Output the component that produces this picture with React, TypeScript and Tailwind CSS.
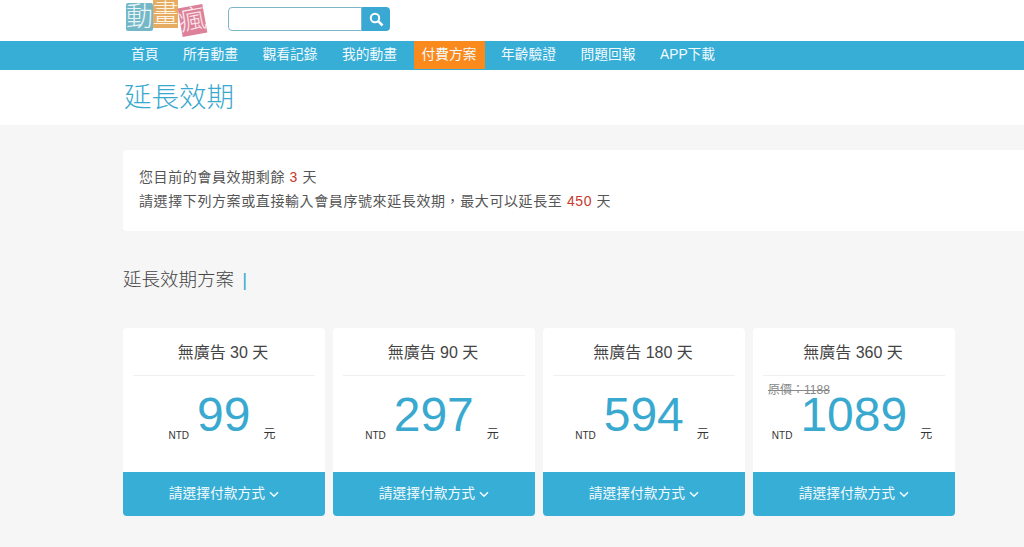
const navItems = ["首頁", "所有動畫", "觀看記錄", "我的動畫", "付費方案", "年齡驗證", "問題回報", "APP下載"];

const plans = [
  { title: "無廣告 30 天", price: "99" },
  { title: "無廣告 90 天", price: "297" },
  { title: "無廣告 180 天", price: "594" },
  { title: "無廣告 360 天", price: "1089", original: "原價\uFF1A1188" },
];

function Logo() {
  return (
    <div className="relative h-[38px] w-[84px] font-light">
      {/* logo tiles */}
      <span className="absolute left-0 top-[3px] flex h-[28px] w-[27px] items-center justify-center rounded-[2px] bg-[#74b7c6] text-[27px] leading-none text-[#e8f4f6]">
        動
      </span>
      <span className="absolute left-[27px] top-0 flex h-[28px] w-[25px] items-center justify-center bg-[#e6ad62] text-[26px] leading-none text-[#fdf3e2]">
        畫
      </span>
      <span className="absolute left-[54px] top-[6px] flex h-[29px] w-[25px] rotate-[-10deg] items-center justify-center bg-[#dc8199] text-[27px] leading-none text-[#fbe8ed]">
        瘋
      </span>
    </div>
  );
}

function PlanCard({ title, price, original }: { title: string; price: string; original?: string }) {
  return (
    <div className="w-[202px] shrink-0">
      <div className="relative h-[144px] rounded-t bg-white px-[10px]">
        <div className="flex h-[48px] items-center justify-center border-b border-[#f0f0f0] pr-[2px] pt-[2px] text-[16px] text-[#444]">
          {title}
        </div>
        {original && (
          <span className="absolute left-[15px] top-[54px] text-[12px] leading-[16px] text-[#888] line-through">
            {original}
          </span>
        )}
        <div className="mt-[11px] flex items-end justify-center pr-[4px] text-[#333]">
          <span className="mb-[1px] text-[10px] leading-[12px]">NTD</span>
          <span className="ml-[8px] text-[48px] leading-[56px] text-[#39a9d0]">{price}</span>
          <span className="mb-[1px] ml-[13px] text-[12px] leading-[16px]">元</span>
        </div>
      </div>
      <button className="flex h-[44px] w-full items-center justify-center gap-[4px] rounded-b bg-[#37aed6] text-[13.75px] text-[#f2fafd]">
        請選擇付款方式
        <svg width="10" height="7" viewBox="0 0 10 7" fill="none" stroke="currentColor" strokeWidth="1.6">
          <path d="M1 1.2 5 5.2 9 1.2" />
        </svg>
      </button>
    </div>
  );
}

export default function App() {
  return (
    <div className="h-[547px] w-full overflow-hidden bg-[#f6f6f6] font-['Liberation_Sans','Noto_Sans_CJK_TC',sans-serif]">
      {/* header */}
      <header className="flex h-[41px] items-start bg-white pl-[126px]">
        <Logo />
        <div className="ml-[18px] mt-[7px] flex h-[24px] w-[162px]">
          <input className="h-full w-[134px] rounded-l border border-[#7fb5c8] bg-white" />
          <button className="flex h-full w-[28px] items-center justify-center rounded-r bg-[#39a9d4] text-white">
            <svg width="15" height="15" viewBox="0 0 15 15" fill="none" stroke="currentColor">
              <circle cx="6" cy="6" r="4.2" strokeWidth="2" />
              <path d="M9.2 9.2 13.5 13.5" strokeWidth="2.6" />
            </svg>
          </button>
        </div>
      </header>

      {/* nav */}
      <nav className="flex h-[29px] gap-[8.5px] bg-[#37aed6] pl-[123px] text-[13.75px] text-[#f2fafd]">
        {navItems.map((item) => (
          <a
            key={item}
            className={
              item === "付費方案"
                ? "flex h-[28px] items-center bg-[#fb8a1d] px-[8px]"
                : "flex h-[28px] items-center px-[8px]"
            }
          >
            {item}
          </a>
        ))}
      </nav>

      {/* page title */}
      <div className="flex h-[55px] items-center bg-white pl-[124px] text-[27.5px] font-light text-[#39a9d0]">
        延長效期
      </div>

      <main className="pl-[123px] pt-[25px]">
        {/* notice */}
        <div className="rounded-l bg-white px-[16px] pb-[18px] pt-[15px] text-[14px] leading-[24px] tracking-[0.6px] text-[#555]">
          <p>
            您目前的會員效期剩餘 <span className="text-[#c8382e]">3</span> 天
          </p>
          <p>
            {"請選擇下列方案或直接輸入會員序號來延長效期\uFF0C最大可以延長至 "}
            <span className="text-[#c8382e]">450</span> 天
          </p>
        </div>

        {/* plans */}
        <h2 className="mt-[36px] text-[18.5px] font-light leading-[26px] text-[#444]">
          延長效期方案 <span className="ml-[3px] text-[#39a9d0]">|</span>
        </h2>
        <div className="mt-[35px] flex gap-[8px]">
          {plans.map((plan) => (
            <PlanCard key={plan.title} {...plan} />
          ))}
        </div>
      </main>
    </div>
  );
}
